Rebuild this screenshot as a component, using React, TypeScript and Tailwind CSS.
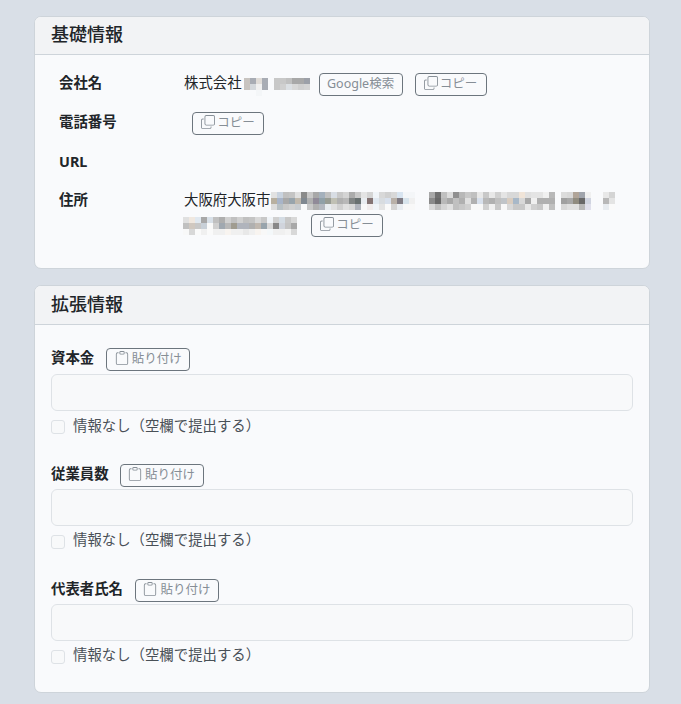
import React from "react";

const font = "font-['Noto_Sans','Noto_Sans_CJK_JP',sans-serif]";

function CopyIcon() {
  return (
    <svg width="14" height="14" viewBox="0 0 16 16" fill="currentColor" className="mr-[2px] mb-[3px] shrink-0">
      <path fillRule="evenodd" d="M4 2a2 2 0 0 1 2-2h8a2 2 0 0 1 2 2v8a2 2 0 0 1-2 2H6a2 2 0 0 1-2-2V2Zm2-1a1 1 0 0 0-1 1v8a1 1 0 0 0 1 1h8a1 1 0 0 0 1-1V2a1 1 0 0 0-1-1H6ZM2 5a1 1 0 0 0-1 1v8a1 1 0 0 0 1 1h8a1 1 0 0 0 1-1v-1h1v1a2 2 0 0 1-2 2H2a2 2 0 0 1-2-2V6a2 2 0 0 1 2-2h1v1H2Z" />
    </svg>
  );
}

function ClipIcon() {
  return (
    <svg width="14" height="14" viewBox="0 0 16 16" fill="currentColor" className="mb-[3px] shrink-0">
      <path d="M4 1.5H3a2 2 0 0 0-2 2V14a2 2 0 0 0 2 2h10a2 2 0 0 0 2-2V3.5a2 2 0 0 0-2-2h-1v1h1a1 1 0 0 1 1 1V14a1 1 0 0 1-1 1H3a1 1 0 0 1-1-1V3.5a1 1 0 0 1 1-1h1v-1z" />
      <path d="M9.5 1a.5.5 0 0 1 .5.5v1a.5.5 0 0 1-.5.5h-3a.5.5 0 0 1-.5-.5v-1a.5.5 0 0 1 .5-.5h3zm-3-1A1.5 1.5 0 0 0 5 1.5v1A1.5 1.5 0 0 0 6.5 4h3A1.5 1.5 0 0 0 11 2.5v-1A1.5 1.5 0 0 0 9.5 0h-3z" />
    </svg>
  );
}

function Btn({ children, className = "" }: { children: React.ReactNode; className?: string }) {
  return (
    <button className={`inline-flex items-center justify-center h-[23px] rounded-[4px] border border-[#6c757d] text-[#868e96] text-[12.5px] leading-none bg-transparent whitespace-nowrap ${className}`}>
      {children}
    </button>
  );
}

function Copy({ className = "" }: { className?: string }) {
  return (
    <Btn className={`w-[72px] ${className}`}>
      <CopyIcon />
      コピー
    </Btn>
  );
}

type Segment = { x: number; rows: string[] };

function cell(token: string) {
  if (token === "..") return null;
  return token.length === 2 ? `#${token}${token}${token}` : `#${token}`;
}

function Mosaic({ w, h, segments, className = "" }: { w: number; h: number; segments: Segment[]; className?: string }) {
  return (
    <svg width={w} height={h} viewBox={`0 0 ${w} ${h}`} className={`shrink-0 block ${className}`}>
      {segments.map((seg, s) =>
        seg.rows.map((row, y) =>
          row.split(" ").map((token, x) => {
            const fill = cell(token);
            return fill ? <rect key={`${s}-${y}-${x}`} x={seg.x + x * 6} y={y * 6} width="6" height="6" fill={fill} /> : null;
          })
        )
      )}
    </svg>
  );
}

const companyMosaic: Segment[] = [
  {
    x: 0,
    rows: [
      "c8c4c0 a8acb4 e0dcd8 a8acb4 .. c8 c8 c0 a8 a8 9ca0a8 c8",
      "c8c4c0 d4d8dc f0f0f0 a8acb4 .. c8 d0 dce0e4 d8 d0 d4",
      ".. .. f4f6f8 .. .. .. .. .. .. .. ..",
    ],
  },
];

const addressMosaic: Segment[] = [
  {
    x: 0,
    rows: [
      "e2 c9d3df c0 c4 e0 8a c8 a8 a4b0bc c0 d8dde4 c8 d4 ab c8 e4e4e4 d4 f0f4f8 d8 d0 d8 d8e4f0 f4f6f8 f4f6f8",
      "b8b0a0 a8b4c8 a8 98a4ac c0b8ac 808890 b0 908a98 90a0a8 989c94 c0c0b4 b0 b8 808484 687070 e8ecf0 847474 e0e8f0 d8dce0 d8e0ec b8b0a8 807c84 d8e4ec f0f0f0",
      "dc b8c0c4 c8 d0 c8ccd0 fa c8 b0 b4b8c0 e8ecf0 e0 d0 e0 d8 b0b4bc f8 f0ecec f0f4f8 e4 fa d4 e8ecf0 f8 f8",
    ],
  },
  {
    x: 158,
    rows: [
      "a8 70 c0 dc 90 b8 c8 c0 e8 c8 e8 d0 e4 d8 d8 f0e4d8 e0 e4 e4 f0 b8",
      "8a 68 b8 a8 c0 b0 e0 b0 d8e0ec b8 b0 c0 c0c4c8 d8ccc0 a8b8c8 d8 a8 f0 b0 b0 b0",
      "d8 c0 d4 e0 c0 c8 d0 f8 f8 d0 f0 c8 f8 d8 c8 c8 e8 d0 c8 f0 c0",
    ],
  },
  {
    x: 290,
    rows: [
      "dc d8 b0a498 a0a4ac f0",
      "a0 a8 908c80 68 d0d4e0",
      "d8 e0 e0 b8 e0e0ec",
    ],
  },
  {
    x: 332,
    rows: ["e8 d4", "b8 e4", "e8ecf0 fa"],
  },
];

const addressMosaic2: Segment[] = [
  {
    x: 0,
    rows: [
      "e0 f0e8e0 e0e8f0 a8 d8e0e8 c0 ae d0 c0 d0 c0 c4 d8 c8 f0f4f8 d0 d4dce4 c8 d8",
      "c0 d0c8c0 c8 c8d0d8 fa d0 a0a8b0 b8 a09c90 b0b4bc b0b4bc b0 c0b8b0 98a4ac d8 88 d0d4dc c4 a8",
      "f8 d8 fa f0 fa f0 f0 f8f4f0 f0 f0 e8 f0 f8f4f0 f8 f4f8fa f0 f0 f4 d8",
    ],
  },
];

function Field({ label, gap, labelGap, textClass, className = "" }: { label: string; gap: string; labelGap: string; textClass: string; className?: string }) {
  return (
    <div className={className}>
      <div className={`flex items-center ${labelGap} h-[23px]`}>
        <span className="text-[14.4px] font-bold leading-none text-[#212529] pb-[3px]">{label}</span>
        <Btn className="w-[84px] gap-[3px]">
          <ClipIcon />
          貼り付け
        </Btn>
      </div>
      <div className={`${gap} h-[37px] rounded-[6px] border border-[#dee2e6] bg-[#f8f9fa]`} />
      <label className="mt-1 flex items-center h-[21px]">
        <span className="w-[14px] h-[14px] mt-[3px] rounded-[3px] border border-[#dee2e6] bg-[#f8f9fa]" />
        <span className={`ml-2 text-[14.4px] leading-none text-[#495057] ${textClass}`}>情報なし（空欄で提出する）</span>
      </label>
    </div>
  );
}

function Card({ title, children, className = "", headerClass }: { title: string; children: React.ReactNode; className?: string; headerClass: string }) {
  return (
    <section className={`rounded-[7px] border border-[#ced4da] bg-[#f9fafc] overflow-hidden ${className}`}>
      <h2 className={`${headerClass} px-4 pb-[2px] flex items-center bg-[#f2f3f5] border-b border-[#ced4da] text-[18px] font-medium text-[#212529]`}>
        {title}
      </h2>
      {children}
    </section>
  );
}

export default function App() {
  return (
    <div className={`${font} w-[681px] h-[704px] overflow-hidden bg-[#d9dfe7] pt-4 pl-[34px] pr-[31px]`}>
      <Card title="基礎情報" className="h-[253px]" headerClass="h-[38px]">
        <div className="pl-6 pr-4 pt-[18px] text-[14.4px] leading-none text-[#212529]">
          <div className="flex items-center h-[23px]">
            <span className="w-[125px] font-bold pb-[3px]">会社名</span>
            <span className="pb-[3px]">株式会社</span>
            <Mosaic w={66} h={18} segments={companyMosaic} className="ml-[2px] self-end" />
            <Btn className="ml-[9px] w-[84px]">Google検索</Btn>
            <Copy className="ml-3" />
          </div>
          <div className="flex items-center h-[23px] mt-[16px]">
            <span className="w-[133px] font-bold pb-[3px]">電話番号</span>
            <Copy />
          </div>
          <div className="h-[23px] mt-[16px] flex items-center font-bold">URL</div>
          <div className="flex mt-[14px]">
            <span className="w-[125px] font-bold h-[22px] pt-[2px] flex items-center">住所</span>
            <div className="flex flex-col">
              <div className="flex items-center h-[22px]">
                <span className="pt-[2px]">大阪府大阪市</span>
                <Mosaic w={344} h={18} segments={addressMosaic} className="ml-[1px] self-end" />
              </div>
              <div className="flex items-center mt-1 -ml-[1px]">
                <Mosaic w={114} h={18} segments={addressMosaic2} />
                <Copy className="ml-[14px]" />
              </div>
            </div>
          </div>
        </div>
      </Card>
      <Card title="拡張情報" className="mt-4 h-[408px]" headerClass="h-[39px]">
        <div className="px-4 pt-[23px]">
          <Field label="資本金" gap="mt-[3px]" labelGap="gap-3" textClass="pt-[2px]" />
          <Field label="従業員数" gap="mt-[2px]" labelGap="gap-[11px]" textClass="" className="mt-7" />
          <Field label="代表者氏名" gap="mt-[2px]" labelGap="gap-3" textClass="" className="mt-7" />
        </div>
      </Card>
    </div>
  );
}
